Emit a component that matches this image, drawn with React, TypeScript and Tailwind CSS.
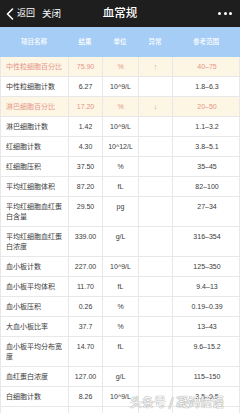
import React from "react";

type Row = {
  name: string;
  value: string;
  unit: string;
  flag?: string;
  range: string;
  abnormal?: boolean;
};

const rows: Row[] = [
  { name: "中性粒细胞百分比", value: "75.90", unit: "%", flag: "↑", range: "40–75", abnormal: true },
  { name: "中性粒细胞计数", value: "6.27", unit: "10^9/L", range: "1.8–6.3" },
  { name: "淋巴细胞百分比", value: "17.20", unit: "%", flag: "↓", range: "20–50", abnormal: true },
  { name: "淋巴细胞计数", value: "1.42", unit: "10^9/L", range: "1.1–3.2" },
  { name: "红细胞计数", value: "4.30", unit: "10^12/L", range: "3.8–5.1" },
  { name: "红细胞压积", value: "37.50", unit: "%", range: "35–45" },
  { name: "平均红细胞体积", value: "87.20", unit: "fL", range: "82–100" },
  { name: "平均红细胞血红蛋白含量", value: "29.50", unit: "pg", range: "27–34" },
  { name: "平均红细胞血红蛋白浓度", value: "339.00", unit: "g/L", range: "316–354" },
  { name: "血小板计数", value: "227.00", unit: "10^9/L", range: "125–350" },
  { name: "血小板平均体积", value: "11.70", unit: "fL", range: "9.4–13" },
  { name: "血小板压积", value: "0.26", unit: "%", range: "0.19–0.39" },
  { name: "大血小板比率", value: "37.7", unit: "%", range: "13–43" },
  { name: "血小板平均分布宽度", value: "14.70", unit: "fL", range: "9.6–15.2" },
  { name: "血红蛋白浓度", value: "127.00", unit: "g/L", range: "115–150" },
  { name: "白细胞计数", value: "8.26", unit: "10^9/L", range: "3.5–9.5" },
  { name: "", value: "", unit: "", range: "" },
];

const font = { fontFamily: '"Liberation Sans", "Noto Sans CJK SC", sans-serif' };

export default function App() {
  return (
    <div
      className="relative w-[240px] h-[413px] overflow-hidden bg-white"
      style={font}
    >
      {/* nav bar */}
      <div className="h-[27px] bg-[#1e1e1e] flex items-center text-white relative">
        <div className="flex items-center pl-[6px]">
          <svg width="8" height="12" viewBox="0 0 8 12" className="mr-[3px]">
            <polyline
              points="6.5,1 1.5,6 6.5,11"
              fill="none"
              stroke="white"
              strokeWidth="1.6"
              strokeLinecap="round"
              strokeLinejoin="round"
            />
          </svg>
          <span className="text-[9px] leading-none">返回</span>
          <span className="text-[9.5px] leading-none ml-[7px]">关闭</span>
        </div>
        <div className="absolute left-0 right-0 top-0 h-[27px] flex items-center justify-center pointer-events-none">
          <span className="text-[11.5px] font-medium leading-none">血常规</span>
        </div>
        <div className="ml-auto pr-[8px] flex items-center gap-[2.5px]">
          <span className="w-[3px] h-[3px] rounded-full bg-white" />
          <span className="w-[3px] h-[3px] rounded-full bg-white" />
          <span className="w-[3px] h-[3px] rounded-full bg-white" />
        </div>
      </div>

      {/* header */}
      <div className="grid grid-cols-[68px_34px_36px_34px_68px] h-[30px] bg-[#a6cdf6] text-white text-[6.5px] font-medium items-center text-center">
        <div>项目名称</div>
        <div>结果</div>
        <div>单位</div>
        <div>异常</div>
        <div>参考范围</div>
      </div>

      {/* rows */}
      <div className="border-l border-r border-[#e8e8e8]">
        {rows.map((r, i) => (
          <div
            key={i}
            className={
              "grid grid-cols-[68px_34px_36px_34px_68px] border-b border-[#e8e8e8] text-[7px] leading-[10px] " +
              (r.abnormal ? "bg-[#fdf6e4] text-[#e5958a]" : "bg-white text-[#3a3a3a]")
            }
          >
            <div className="pl-[6px] pr-[4px] pt-[5px] pb-[4px] min-h-[19px] border-r border-[#e8e8e8] break-all -ml-px">
              {r.name}
            </div>
            <div className="pt-[5px] pb-[4px] text-center border-r border-[#e8e8e8]">{r.value}</div>
            <div className="pt-[5px] pb-[4px] text-center border-r border-[#e8e8e8]">{r.unit}</div>
            <div className="pt-[5px] pb-[4px] text-center border-r border-[#e8e8e8] font-bold">{r.flag ?? ""}</div>
            <div className="pt-[5px] pb-[4px] text-center">{r.range}</div>
          </div>
        ))}
      </div>

      {/* watermark */}
      <div
        className="absolute left-[130px] top-[394px] text-[12px] leading-[16px] text-white whitespace-nowrap"
        style={{
          fontFamily: '"Noto Sans CJK SC", sans-serif',
          textShadow: "0 0 1px #888, 0 0 1px #888",
        }}
      >
        头条号 / 凝妈悟语
      </div>
    </div>
  );
}
